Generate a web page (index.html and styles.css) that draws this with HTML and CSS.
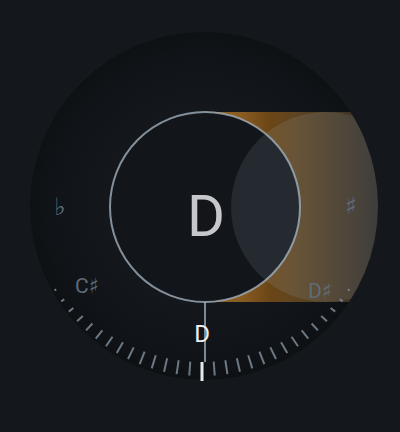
FILE: index.html
```html
<!DOCTYPE html>
<html lang="en">
<head>
<meta charset="utf-8">
<title>Tuner</title>
<link rel="stylesheet" href="styles.css">
</head>
<body>
<main class="stage">
  <svg class="tuner" width="400" height="432" viewBox="0 0 400 432" xmlns="http://www.w3.org/2000/svg">
    <defs>
      <radialGradient id="discGrad" cx="204" cy="206" r="174" gradientUnits="userSpaceOnUse">
        <stop offset="0" stop-color="#171b20"/>
        <stop offset="0.55" stop-color="#14171c"/>
        <stop offset="0.88" stop-color="#101317"/>
        <stop offset="1" stop-color="#0e1114"/>
      </radialGradient>
      <linearGradient id="bandGrad" x1="205" y1="0" x2="380" y2="0" gradientUnits="userSpaceOnUse">
        <stop offset="0" stop-color="#8e6126"/>
        <stop offset="0.2" stop-color="#8a5d22"/>
        <stop offset="0.37" stop-color="#6b4616"/>
        <stop offset="0.5" stop-color="#604520"/>
        <stop offset="1" stop-color="#2f2b26"/>
      </linearGradient>
      <clipPath id="discClip">
        <circle cx="204" cy="206" r="174"/>
      </clipPath>
    </defs>

    <circle class="disc" cx="204" cy="206" r="174"/>

    <g clip-path="url(#discClip)">
      <rect class="band" x="205" y="112" width="180" height="190"/>
    </g>

    <g class="ticks">
      <line x1="202" y1="362" x2="202" y2="376" transform="rotate(4.3 202 206)"/>
      <line x1="202" y1="362" x2="202" y2="376" transform="rotate(8.6 202 206)"/>
      <line x1="202" y1="362.1" x2="202" y2="376" transform="rotate(12.9 202 206)"/>
      <line x1="202" y1="362.3" x2="202" y2="376" transform="rotate(17.2 202 206)"/>
      <line x1="202" y1="362.6" x2="202" y2="376" transform="rotate(21.5 202 206)"/>
      <line x1="202" y1="363" x2="202" y2="376" transform="rotate(25.8 202 206)"/>
      <line x1="202" y1="363.6" x2="202" y2="376" transform="rotate(30.1 202 206)"/>
      <line x1="202" y1="364.4" x2="202" y2="376" transform="rotate(34.4 202 206)"/>
      <line x1="202" y1="365.4" x2="202" y2="376" transform="rotate(38.7 202 206)"/>
      <line x1="202" y1="366.7" x2="202" y2="376" transform="rotate(43 202 206)"/>
      <line x1="202" y1="368.2" x2="202" y2="376" transform="rotate(47.3 202 206)"/>
      <line x1="202" y1="370.1" x2="202" y2="376" transform="rotate(51.6 202 206)"/>
      <line x1="202" y1="372.3" x2="202" y2="376" transform="rotate(55.9 202 206)"/>
      <line x1="202" y1="374" x2="202" y2="376" transform="rotate(60.2 202 206)"/>
      <line x1="202" y1="362" x2="202" y2="376" transform="rotate(-4.3 202 206)"/>
      <line x1="202" y1="362" x2="202" y2="376" transform="rotate(-8.6 202 206)"/>
      <line x1="202" y1="362.1" x2="202" y2="376" transform="rotate(-12.9 202 206)"/>
      <line x1="202" y1="362.3" x2="202" y2="376" transform="rotate(-17.2 202 206)"/>
      <line x1="202" y1="362.6" x2="202" y2="376" transform="rotate(-21.5 202 206)"/>
      <line x1="202" y1="363" x2="202" y2="376" transform="rotate(-25.8 202 206)"/>
      <line x1="202" y1="363.6" x2="202" y2="376" transform="rotate(-30.1 202 206)"/>
      <line x1="202" y1="364.4" x2="202" y2="376" transform="rotate(-34.4 202 206)"/>
      <line x1="202" y1="365.4" x2="202" y2="376" transform="rotate(-38.7 202 206)"/>
      <line x1="202" y1="366.7" x2="202" y2="376" transform="rotate(-43 202 206)"/>
      <line x1="202" y1="368.2" x2="202" y2="376" transform="rotate(-47.3 202 206)"/>
      <line x1="202" y1="370.1" x2="202" y2="376" transform="rotate(-51.6 202 206)"/>
      <line x1="202" y1="372.3" x2="202" y2="376" transform="rotate(-55.9 202 206)"/>
      <line x1="202" y1="374" x2="202" y2="376" transform="rotate(-60.2 202 206)"/>
    </g>
    <line class="tick-center" x1="202" y1="362" x2="202" y2="381"/>

    <line class="needle" x1="205" y1="302" x2="205" y2="362"/>

    <circle class="inner" cx="205" cy="207" r="95"/>

    <g clip-path="url(#discClip)">
      <circle class="target" cx="326" cy="207" r="95"/>
    </g>

    <text class="note-main" x="206" y="236">D</text>
    <text class="note-small" x="202" y="342">D</text>

    <text class="label sym" x="60" y="215">♭</text>
    <text class="label sym" x="351" y="214">♯</text>
    <text class="label" x="87" y="293">C♯</text>
    <text class="label" x="320" y="298">D♯</text>
  </svg>
</main>
</body>
</html>
```

FILE: styles.css
```css
html, body {
  margin: 0;
  padding: 0;
  background: #14181d;
}

.stage {
  width: 400px;
  height: 432px;
  display: flex;
  overflow: hidden;
}

.tuner {
  display: block;
  font-family: Roboto, "DejaVu Sans", sans-serif;
}

.disc {
  fill: url(#discGrad);
}

.band {
  fill: url(#bandGrad);
}

.ticks line {
  stroke: #6c7985;
  stroke-width: 2;
}

.tick-center {
  stroke: #e6e8ea;
  stroke-width: 3;
}

.needle {
  stroke: #7d8a95;
  stroke-width: 2;
}

.inner {
  fill: #121519;
  stroke: rgba(160, 175, 188, 0.8);
  stroke-width: 2;
}

.target {
  fill: rgba(170, 195, 220, 0.12);
}

.note-main {
  font-size: 58px;
  fill: #c5c7ca;
  text-anchor: middle;
}

.note-small {
  font-size: 24px;
  fill: #eceef0;
  text-anchor: middle;
}

.label {
  font-size: 21px;
  fill: #5f6b77;
  text-anchor: middle;
}

.label.sym {
  font-family: "DejaVu Sans", sans-serif;
  font-size: 24px;
}
```
